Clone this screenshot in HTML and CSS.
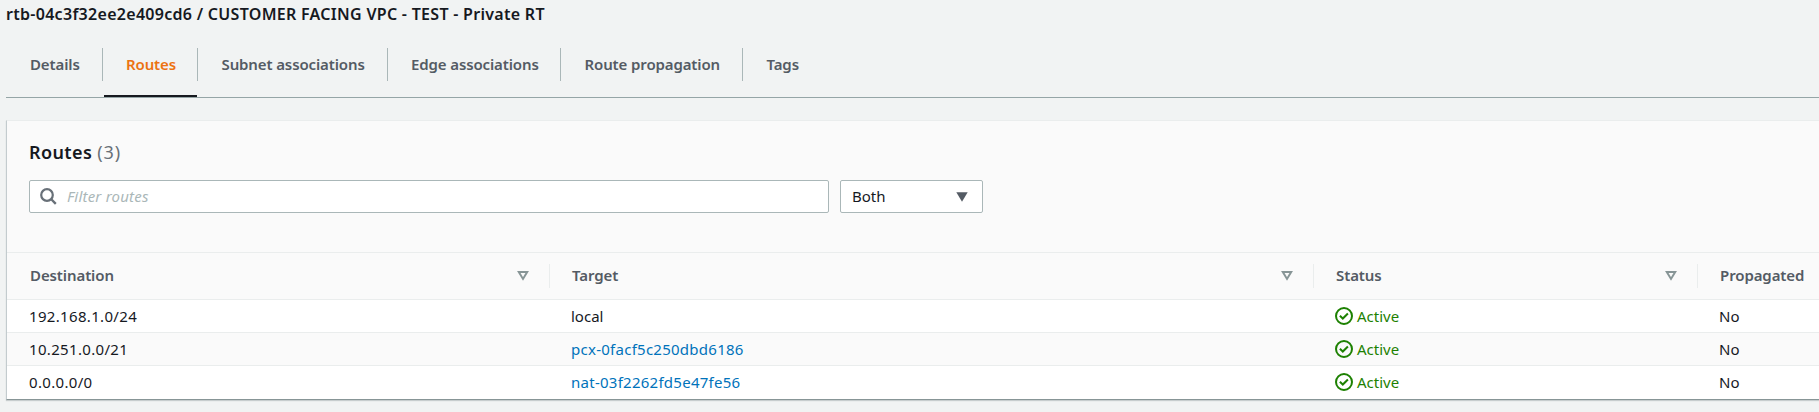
FILE: index.html
```html
<!DOCTYPE html>
<html lang="en">
<head>
<meta charset="utf-8">
<title>Route table</title>
<link rel="stylesheet" href="styles.css">
</head>
<body>
<svg class="defs" width="0" height="0">
  <symbol id="sort" viewBox="0 0 12 11"><path d="M1.8 1.9h8.4L6 8.9z" fill="none" stroke="#879596" stroke-width="2"/></symbol>
  <symbol id="ok" viewBox="0 0 18 18"><circle cx="9" cy="9" r="8" fill="none" stroke="#1d8102" stroke-width="2"/><path d="M4.9 8.800l2.900 2.700L12.900 6.500" fill="none" stroke="#1d8102" stroke-width="2"/></symbol>
</svg>
<h1 class="title"><span>rtb-04c3f32ee2e409cd6 / CUSTOMER FACING VPC - TEST - Private RT</span></h1>
<nav class="tabs">
  <a class="tab details"><span>Details</span></a>
  <a class="tab routes active"><span>Routes</span></a>
  <a class="tab subnet"><span>Subnet associations</span></a>
  <a class="tab edge"><span>Edge associations</span></a>
  <a class="tab propagation"><span>Route propagation</span></a>
  <a class="tab tags"><span>Tags</span></a>
</nav>
<main class="panel">
  <header class="panel-header">
    <h2 class="heading"><span class="heading-name">Routes</span><span class="count">(3)</span></h2>
    <div class="filters">
      <div class="search">
        <svg class="search-icon" width="17" height="17" viewBox="0 0 17 17"><circle cx="7" cy="7" r="5.8" fill="none" stroke="#687078" stroke-width="2.2"/><path d="M11 11l4.800 4.800" stroke="#687078" stroke-width="2.400"/></svg>
        <span class="placeholder">Filter routes</span>
      </div>
      <div class="select"><span>Both</span><svg width="12" height="10" viewBox="0 0 12 10"><path d="M0.300 0.300h11.400L6 9.700z" fill="#545b64"/></svg></div>
    </div>
  </header>
  <div class="row head">
    <div class="cell"><span>Destination</span><svg class="sort" width="12" height="11"><use href="#sort"/></svg></div>
    <div class="cell"><span>Target</span><svg class="sort" width="12" height="11"><use href="#sort"/></svg></div>
    <div class="cell"><span>Status</span><svg class="sort" width="12" height="11"><use href="#sort"/></svg></div>
    <div class="cell"><span>Propagated</span></div>
  </div>
  <div class="row">
    <div class="cell num"><span>192.168.1.0/24</span></div>
    <div class="cell"><span>local</span></div>
    <div class="cell status"><svg width="18" height="18"><use href="#ok"/></svg><span>Active</span></div>
    <div class="cell"><span>No</span></div>
  </div>
  <div class="row striped">
    <div class="cell num"><span>10.251.0.0/21</span></div>
    <div class="cell"><a class="link">pcx-0facf5c250dbd6186</a></div>
    <div class="cell status"><svg width="18" height="18"><use href="#ok"/></svg><span>Active</span></div>
    <div class="cell"><span>No</span></div>
  </div>
  <div class="row">
    <div class="cell num"><span>0.0.0.0/0</span></div>
    <div class="cell"><a class="link">nat-03f2262fd5e47fe56</a></div>
    <div class="cell status"><svg width="18" height="18"><use href="#ok"/></svg><span>Active</span></div>
    <div class="cell"><span>No</span></div>
  </div>
</main>
</body>
</html>
```
FILE: styles.css
```css
* { box-sizing: border-box; }
body {
  margin: 0;
  padding-left: 6px;
  height: 412px;
  overflow: hidden;
  background: #f1f3f3;
  color: #16191f;
  font: 15px/20px "Noto Sans", sans-serif;
  white-space: nowrap;
}
.defs { display: block; height: 0; }
.title { margin: 0; padding-top: 4px; height: 48px; font-size: 16px; line-height: 20px; font-weight: 600; letter-spacing: 0.29px; }
.tabs { display: flex; height: 50px; border-bottom: 1px solid #95a5a6; color: #545b64; font-weight: 600; letter-spacing: -0.12px; }
.tab { display: flex; align-items: flex-start; height: 49px; }
.tab span { height: 33px; padding: 6px 0 0 23.5px; line-height: 20px; border-right: 1px solid #aab7b8; }
.tab.details span { width: 97px; padding-left: 24px; }
.tab.routes span { width: 95px; padding-left: 23px; }
.tab.subnet span { width: 190px; }
.tab.edge span { width: 173px; padding-left: 23px; }
.tab.propagation span { width: 182px; }
.tab.tags span { border: 0; }
.tab.active { color: #ec7211; background: linear-gradient(#16191f, #16191f) 1px 100% / 93px 2px no-repeat; }
.panel { margin-top: 22px; height: 280px; border: solid; border-width: 1px 0 1px 1px; border-color: #eaeded #eaeded #879596 #c3cbce; background: #fff; box-shadow: 0 1px 1px #c7cdce; }
.panel-header { height: 132px; padding: 19px 0 0 22px; background: #fafafa; border-bottom: 1px solid #eaeded; }
.heading { display: flex; gap: 5px; margin: 0; height: 40px; font-size: 18px; line-height: 24px; font-weight: 600; letter-spacing: 0.4px; }
.count { color: #687078; font-weight: 400; letter-spacing: 0.9px; }
.filters { display: flex; gap: 11px; }
.search, .select { display: flex; align-items: center; height: 33px; border: 1px solid #aab7b8; border-radius: 2px; background: #fff; }
.search { width: 800px; padding-left: 11px; gap: 9px; }
.search-icon { margin-left: -1px; margin-right: 1px; }
.placeholder { color: #aab7b8; font-style: italic; letter-spacing: 0.2px; padding-bottom: 1px; }
.select { width: 143px; justify-content: space-between; padding: 0 14px 0 11px; }
.select span { padding-bottom: 2px; }
.row { display: grid; grid-template-columns: 543px 764px 384px 1fr; height: 33px; border-bottom: 1px solid #eaeded; }
.row:last-child { border-color: transparent; }
.row.head { height: 47px; background: #fafafa; color: #545b64; font-weight: 600; align-items: center; letter-spacing: -0.1px; }
.striped { background: #fafafa; }
.cell { display: flex; align-items: center; padding-left: 21px; min-width: 0; }
.cell:first-child { padding-left: 22px; }
.num { letter-spacing: 0.33px; }
.head .cell { height: 24px; padding: 0 20px 0 22px; justify-content: space-between; border-right: 1px solid #eaeded; }
.head .cell span { padding-bottom: 2px; }
.head .sort { margin-top: -1px; }
.head .cell:first-child { padding-left: 23px; }
.head .cell:last-child { border: 0; }
.link { color: #0073bb; letter-spacing: 0.26px; }
.status { color: #1d8102; gap: 4px; }
```
